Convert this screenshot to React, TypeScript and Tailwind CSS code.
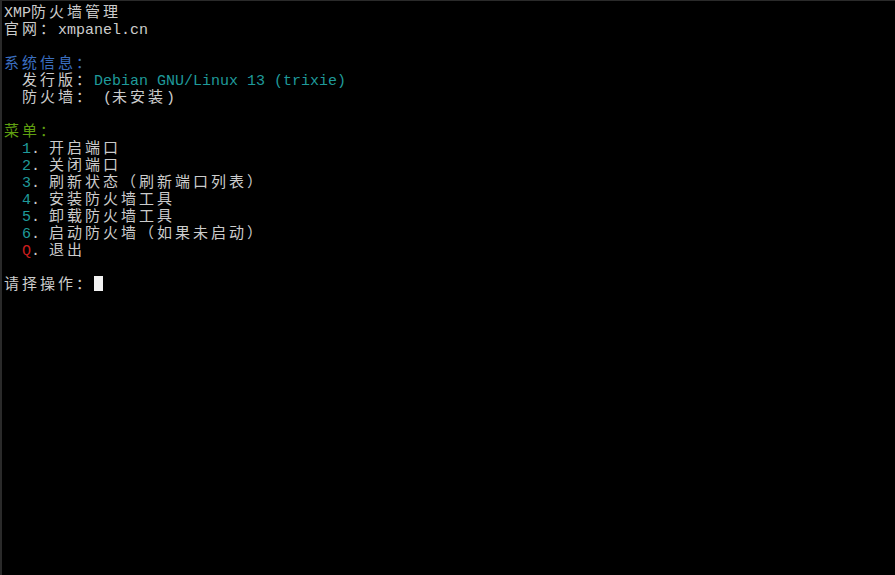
import type { ReactNode } from "react";

// wide (CJK) text: 15px glyph + 3px tracking = two 9px cells
function W({ children }: { children: ReactNode }) {
  return (
    <span className="tracking-[3px] [font-family:'Noto_Sans_CJK_SC','Liberation_Mono',monospace]">
      {children}
    </span>
  );
}

function Line({ children }: { children?: ReactNode }) {
  return <div className="h-[17px] leading-[15px] whitespace-pre">{children}</div>;
}

const menu = [
  { key: "1", label: "开启端口" },
  { key: "2", label: "关闭端口" },
  { key: "3", label: "刷新状态（刷新端口列表）" },
  { key: "4", label: "安装防火墙工具" },
  { key: "5", label: "卸载防火墙工具" },
  { key: "6", label: "启动防火墙（如果未启动）" },
];

export default function App() {
  return (
    <div className="w-[895px] h-[575px] bg-black border-l-2 border-t border-l-[#2a2a2a] border-t-[#2a2a2a] pl-[2px] pt-[2px] overflow-hidden text-[15px] text-[#cccccc] [font-family:'Liberation_Mono','Noto_Sans_CJK_SC',monospace]">
      <Line>
        XMP<W>防火墙管理</W>
      </Line>
      <Line>
        <W>官网：</W>xmpanel.cn
      </Line>
      <Line />
      <Line>
        <span className="text-[#3b6fc0]">
          <W>系统信息：</W>
        </span>
      </Line>
      <Line>
        {"  "}
        <W>发行版：</W>
        <span className="text-[#1f9a9a]">Debian GNU/Linux 13 (trixie)</span>
      </Line>
      <Line>
        {"  "}
        <W>防火墙：</W> (<W>未安装</W>)
      </Line>
      <Line />
      <Line>
        <span className="text-[#5f9f10]">
          <W>菜单：</W>
        </span>
      </Line>
      {menu.map((m) => (
        <Line key={m.key}>
          {"  "}
          <span className="text-[#1f9a9a]">{m.key}</span>. <W>{m.label}</W>
        </Line>
      ))}
      <Line>
        {"  "}
        <span className="text-[#c81e1e]">Q</span>. <W>退出</W>
      </Line>
      <Line />
      <Line>
        <W>请择操作：</W>
        <span className="inline-block w-[9px] h-[15px] bg-[#f2f2f2] align-[-2px]" />
      </Line>
    </div>
  );
}
